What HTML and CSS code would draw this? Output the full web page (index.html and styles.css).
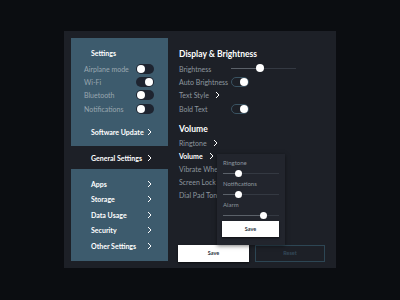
FILE: index.html
```html
<!DOCTYPE html>
<html>
	<head>
		<meta charset="utf-8" />
		<title>Settings</title>
		<link rel="stylesheet" href="styles.css">
	</head>
	<body>
		<div class="panel">
			<!-- left menu -->
			<div class="menu">
				<div class="card card-top">
					<div class="card-title">Settings</div>
					<div class="switch-row"><span>Airplane mode</span><i class="toggle"></i></div>
					<div class="switch-row"><span>Wi-Fi</span><i class="toggle on"></i></div>
					<div class="switch-row"><span>Bluetooth</span><i class="toggle"></i></div>
					<div class="switch-row"><span>Notifications</span><i class="toggle"></i></div>
					<div class="link link-update"><span>Software Update</span><svg class="chev" viewBox="0 0 5 8"><polyline points="1,1 4,4 1,7"/></svg></div>
				</div>
				<div class="link link-general"><span>General Settings</span><svg class="chev" viewBox="0 0 5 8"><polyline points="1,1 4,4 1,7"/></svg></div>
				<div class="card card-bottom">
					<div class="link"><span>Apps</span><svg class="chev" viewBox="0 0 5 8"><polyline points="1,1 4,4 1,7"/></svg></div>
					<div class="link"><span>Storage</span><svg class="chev" viewBox="0 0 5 8"><polyline points="1,1 4,4 1,7"/></svg></div>
					<div class="link"><span>Data Usage</span><svg class="chev" viewBox="0 0 5 8"><polyline points="1,1 4,4 1,7"/></svg></div>
					<div class="link"><span>Security</span><svg class="chev" viewBox="0 0 5 8"><polyline points="1,1 4,4 1,7"/></svg></div>
					<div class="link"><span>Other Settings</span><svg class="chev" viewBox="0 0 5 8"><polyline points="1,1 4,4 1,7"/></svg></div>
				</div>
			</div>

			<!-- right content -->
			<div class="content">
				<h3 class="heading">Display &amp; Brightness</h3>
				<div class="row"><span class="label">Brightness</span><div class="slider wide"><b style="width: 45%"></b><i style="left: 45%"></i></div></div>
				<div class="row"><span class="label">Auto Brightness</span><i class="toggle outline"></i></div>
				<div class="row"><span>Text Style</span><svg class="chev" viewBox="0 0 5 8"><polyline points="1,1 4,4 1,7"/></svg></div>
				<div class="row"><span class="label">Bold Text</span><i class="toggle outline"></i></div>

				<h3 class="heading heading-vol">Volume</h3>
				<div class="row tight"><span>Ringtone</span><svg class="chev" viewBox="0 0 5 8"><polyline points="1,1 4,4 1,7"/></svg></div>
				<div class="row tight active"><span>Volume</span><svg class="chev" viewBox="0 0 5 8"><polyline points="1,1 4,4 1,7"/></svg></div>
				<div class="row tight clip"><span>Vibrate When Ringing</span></div>
				<div class="row tight clip"><span>Screen Lock Sound</span></div>
				<div class="row tight clip"><span>Dial Pad Tones</span></div>

				<div class="buttons">
					<div class="btn btn-save">Save</div>
					<div class="btn btn-reset">Reset</div>
				</div>

				<!-- volume popup -->
				<div class="popup">
					<div class="pop-label">Ringtone</div>
					<div class="slider"><b style="width: 28%"></b><i style="left: 28%"></i></div>
					<div class="pop-label">Notifications</div>
					<div class="slider"><b style="width: 28%"></b><i style="left: 28%"></i></div>
					<div class="pop-label">Alarm</div>
					<div class="slider"><b style="width: 72%"></b><i style="left: 72%"></i></div>
					<div class="btn btn-save pop-save">Save</div>
				</div>
			</div>
		</div>
	</body>
</html>
```

FILE: styles.css
```css
body {
	margin: 0;
	background-color: #0b0d11;
	font-family: Lato, "Open Sans", "Liberation Sans", sans-serif;
	font-size: 7px;
	color: #8d979f;
}
.panel {
	display: grid;
	grid-template-columns: 97px 1fr;
	column-gap: 10px;
	width: 258px;
	height: 223px;
	margin: 31px 0 0 64px;
	padding: 7px;
	background-color: #1d2027;
}
/** left menu **/
.menu {
	display: flex;
	flex-direction: column;
}
.card {
	background-color: #3d5b6d;
}
.card-top {
	height: 108px;
	box-sizing: border-box;
	padding: 10px 14px 0 13px;
}
.card-title {
	height: 10px;
	line-height: 10px;
	padding-left: 7px;
	margin-bottom: 4px;
	font-size: 7px;
	font-weight: bold;
	color: #fff;
}
.switch-row {
	display: flex;
	align-items: center;
	justify-content: space-between;
	height: 13.4px;
	color: #9aa7b0;
}
.toggle {
	position: relative;
	display: block;
	width: 18px;
	height: 10px;
	border-radius: 5px;
	background-color: #1e2430;
}
.toggle::after {
	content: '';
	position: absolute;
	top: 1px;
	left: 1px;
	width: 8px;
	height: 8px;
	border-radius: 50%;
	background-color: #fff;
}
.toggle.on::after {
	left: 9px;
}
.toggle.outline {
	box-sizing: border-box;
	background-color: transparent;
	border: 1px solid #3a5362;
}
.toggle.outline::after {
	top: 0;
	left: 8px;
}
.link {
	display: flex;
	align-items: center;
	justify-content: space-between;
	height: 15.5px;
	padding: 0 16px 0 20px;
	font-size: 7px;
	font-weight: bold;
	color: #fff;
}
.link-update {
	margin-top: 9px;
	padding: 0 2px 0 7px;
}
.link-general {
	height: 23px;
}
.card-bottom {
	flex: 1;
	padding-top: 7px;
}
.chev {
	width: 5px;
	height: 8px;
	fill: none;
	stroke: #fff;
	stroke-width: 1;
}
/** right content **/
.content {
	position: relative;
	display: flex;
	flex-direction: column;
}
.heading {
	height: 12px;
	line-height: 12px;
	margin: 10px 0 2px 1px;
	font-size: 8.5px;
	font-weight: bold;
	color: #fff;
}
.heading-vol {
	margin-top: 7px;
	margin-bottom: 2px;
}
.row {
	display: flex;
	align-items: center;
	height: 13.4px;
	padding-left: 1px;
	white-space: nowrap;
}
.row.tight {
	height: 13px;
}
.row.clip {
	width: 38px;
	overflow: hidden;
}
.row .label {
	width: 52px;
}
.row .chev {
	margin-left: 6px;
}
.row.active {
	font-weight: bold;
	color: #fff;
}
.slider {
	position: relative;
	height: 1px;
	background-color: #343942;
}
.slider.wide {
	width: 65px;
}
.slider b {
	position: absolute;
	top: 0;
	left: 0;
	height: 1px;
	background-color: #5b6169;
}
.slider i {
	position: absolute;
	top: -4px;
	width: 8px;
	height: 8px;
	margin-left: -4px;
	border-radius: 50%;
	background-color: #fff;
}
.buttons {
	display: flex;
	gap: 6px;
	margin-top: auto;
	margin-bottom: -1px;
}
.btn {
	box-sizing: border-box;
	width: 71px;
	height: 17px;
	line-height: 17px;
	text-align: center;
	font-size: 5.5px;
	font-weight: bold;
}
.btn-save {
	background-color: #fff;
	color: #2a3340;
	box-shadow: 0 1px 2px rgba(0, 0, 0, .6);
}
.btn-reset {
	width: 70px;
	border: 1px solid #2d4654;
	line-height: 15px;
	color: #34495a;
}
/** volume popup **/
.popup {
	position: absolute;
	left: 39px;
	top: 116px;
	width: 68px;
	height: 91px;
	box-sizing: border-box;
	padding: 4px 6px 0 6px;
	background-color: #22252d;
	box-shadow: 0 1px 4px rgba(0, 0, 0, .5);
}
.pop-label {
	height: 10px;
	line-height: 10px;
	font-size: 6px;
	color: #8d979f;
}
.popup .slider {
	width: 56px;
	margin: 5px 0 5px;
}
.popup .slider i {
	top: -3.5px;
	width: 7px;
	height: 7px;
	margin-left: -3.5px;
}
.pop-save {
	width: 57px;
	height: 16px;
	line-height: 16px;
	margin-top: 3px;
	margin-left: -1px;
}
```
